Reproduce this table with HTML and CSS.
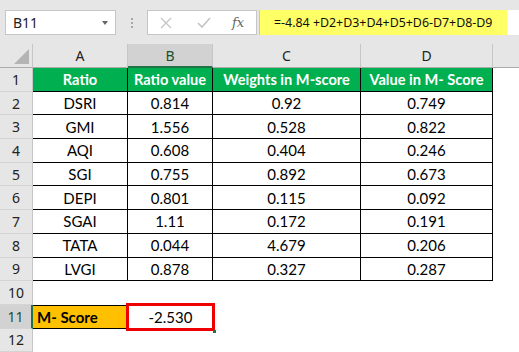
FILE: index.html
```html
<!DOCTYPE html>
<html>
<head>
<meta charset="utf-8">
<link rel="stylesheet" href="styles.css">
</head>
<body>
<div class="toolbar">
  <div class="namebox"><span class="nb-text">B11</span><span class="nb-arrow"></span></div>
  <div class="dots"><i></i><i></i><i></i></div>
  <div class="fxbox">
    <svg class="ic-x" width="12" height="12" viewBox="0 0 12 12"><path d="M1 1 L11 11 M11 1 L1 11" stroke="#c4c4c4" stroke-width="1.3" fill="none"/></svg>
    <svg class="ic-check" width="14" height="12" viewBox="0 0 14 12"><path d="M1 6 L5 10 L13 1" stroke="#c4c4c4" stroke-width="1.6" fill="none"/></svg>
    <span class="ic-fx">fx</span>
  </div>
  <div class="formula">=-4.84 +D2+D3+D4+D5+D6-D7+D8-D9</div>
  <div class="formula-rest"></div>
</div>
<div class="sheet">
  <div class="corner"><span class="tri"></span></div>
  <div class="colh">A</div>
  <div class="colh sel">B</div>
  <div class="colh">C</div>
  <div class="colh">D</div>
  <div class="colh last"></div>

  <div class="rowh">1</div>
  <div class="t hd">Ratio</div><div class="t hd">Ratio value</div><div class="t hd">Weights in M-score</div><div class="t hd">Value in M- Score</div><div class="e"></div>

  <div class="rowh">2</div>
  <div class="t">DSRI</div><div class="t">0.814</div><div class="t">0.92</div><div class="t">0.749</div><div class="e"></div>
  <div class="rowh">3</div>
  <div class="t">GMI</div><div class="t">1.556</div><div class="t">0.528</div><div class="t">0.822</div><div class="e"></div>
  <div class="rowh">4</div>
  <div class="t">AQI</div><div class="t">0.608</div><div class="t">0.404</div><div class="t">0.246</div><div class="e"></div>
  <div class="rowh">5</div>
  <div class="t">SGI</div><div class="t">0.755</div><div class="t">0.892</div><div class="t">0.673</div><div class="e"></div>
  <div class="rowh">6</div>
  <div class="t">DEPI</div><div class="t">0.801</div><div class="t">0.115</div><div class="t">0.092</div><div class="e"></div>
  <div class="rowh">7</div>
  <div class="t">SGAI</div><div class="t">1.11</div><div class="t">0.172</div><div class="t">0.191</div><div class="e"></div>
  <div class="rowh">8</div>
  <div class="t">TATA</div><div class="t">0.044</div><div class="t">4.679</div><div class="t">0.206</div><div class="e"></div>
  <div class="rowh">9</div>
  <div class="t">LVGI</div><div class="t">0.878</div><div class="t">0.327</div><div class="t">0.287</div><div class="e"></div>

  <div class="rowh">10</div>
  <div class="e"></div><div class="e"></div><div class="e"></div><div class="e"></div><div class="e"></div>

  <div class="rowh sel">11</div>
  <div class="mlabel">M- Score</div><div class="mval">-2.530</div><div class="e"></div><div class="e"></div><div class="e"></div>

  <div class="rowh">12</div>
  <div class="e"></div><div class="e"></div><div class="e"></div><div class="e"></div><div class="e"></div>
</div>
</body>
</html>
```
FILE: styles.css
```css
html, body {
  margin: 0;
  padding: 0;
  background: #ffffff;
  overflow: hidden;
}
body {
  width: 519px;
  height: 352px;
  font-family: Lato, "Noto Sans", sans-serif;
}
.toolbar {
  height: 44px;
  background: #e6e6e6;
  display: flex;
  align-items: flex-start;
  padding-top: 10px;
  box-sizing: border-box;
}
.namebox {
  margin-left: 5px;
  width: 111px;
  height: 25px;
  box-sizing: border-box;
  background: #fff;
  border: 1px solid #c6c6c6;
  display: flex;
  align-items: center;
  padding-left: 7px;
  font-family: "Noto Sans", sans-serif;
  font-size: 14px;
  color: #222;
}
.nb-text { flex: 1; }
.nb-arrow {
  width: 0; height: 0;
  border-left: 3.5px solid transparent;
  border-right: 3.5px solid transparent;
  border-top: 4px solid #666;
  margin-right: 7px;
}
.dots {
  width: 31px;
  height: 25px;
  display: flex;
  flex-direction: column;
  align-items: center;
  justify-content: center;
  gap: 2px;
}
.dots i {
  display: block;
  width: 2px;
  height: 2px;
  background: #a8a8a8;
}
.fxbox {
  width: 110px;
  height: 25px;
  box-sizing: border-box;
  background: #fff;
  border: 1px solid #c6c6c6;
  display: flex;
  align-items: center;
}
.ic-x { margin-left: 12px; }
.ic-check { margin-left: 25px; }
.ic-fx {
  margin-left: 21px;
  font-family: "DejaVu Serif", "Liberation Serif", serif;
  font-style: italic;
  font-size: 13px;
  color: #666;
}
.formula {
  margin-left: 2px;
  width: 248px;
  height: 25px;
  box-sizing: border-box;
  background: #ffff66;
  border-left: 1px solid #c6c6c6;
  padding-left: 14px;
  display: flex;
  align-items: center;
  font-family: "Noto Sans", sans-serif;
  font-size: 12.4px;
  color: #111;
  white-space: nowrap;
}
.formula-rest {
  flex: 1;
  height: 25px;
  background: #fff;
}
.sheet {
  display: grid;
  grid-template-columns: 33px 95px 85px 148px 132px 1fr;
  grid-template-rows: 24px repeat(12, 23.7px);
  font-size: 15px;
}
.corner {
  background: #e6e6e6;
  border-right: 1px solid #c6c6c6;
  border-bottom: 1px solid #ababab;
  position: relative;
}
.tri {
  position: absolute;
  right: 3px;
  bottom: 3px;
  width: 0; height: 0;
  border-left: 15px solid transparent;
  border-bottom: 15px solid #b4b4b4;
}
.colh {
  background: #e6e6e6;
  border-right: 1px solid #c6c6c6;
  border-bottom: 1px solid #ababab;
  display: flex;
  align-items: center;
  justify-content: center;
  font-family: "Noto Sans", sans-serif;
  font-size: 14px;
  color: #222;
}
.colh.sel {
  background: #d2d2d2;
  border-bottom: 2px solid #217346;
  color: #1a4f2c;
}
.colh.last { border-right: none; }
.rowh {
  background: #e6e6e6;
  border-right: 1px solid #c6c6c6;
  border-bottom: 1px solid #d4d4d4;
  display: flex;
  align-items: center;
  justify-content: center;
  font-family: "Noto Sans", sans-serif;
  font-size: 14px;
  color: #222;
}
.rowh.sel {
  background: #d2d2d2;
  border-right: 2px solid #217346;
  color: #1a4f2c;
}
.t {
  border-right: 1px solid #000;
  border-bottom: 1px solid #000;
  display: flex;
  align-items: center;
  justify-content: center;
  color: #000;
  white-space: nowrap;
}
.t.hd {
  background: #00b050;
  color: #fff;
  font-weight: bold;
  font-size: 14.6px;
}
.e { background: #fff; }
.mlabel {
  background: #ffc000;
  border-bottom: 1px solid #000;
  border-top: 1px solid #000;
  display: flex;
  align-items: center;
  padding-left: 4px;
  font-weight: bold;
  color: #000;
}
.mval {
  position: relative;
  display: flex;
  align-items: center;
  justify-content: center;
  outline: 3px solid #ee0000;
  outline-offset: -1px;
  color: #000;
}
.mval::after {
  content: "";
  position: absolute;
  right: -3px;
  bottom: -4px;
  width: 3px;
  height: 3px;
  background: #217346;
}
```
